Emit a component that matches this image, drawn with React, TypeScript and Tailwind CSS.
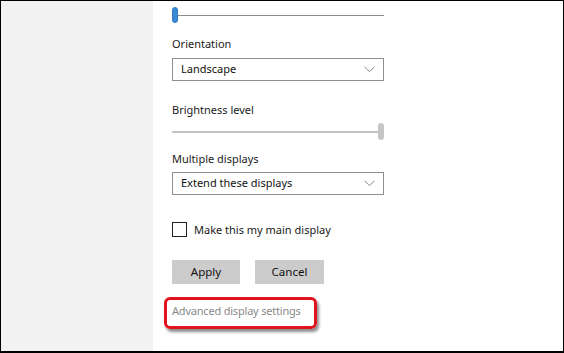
import React from "react";

function Chevron() {
  return (
    <svg width="11" height="7" viewBox="0 0 11 7" className="ml-auto mr-[8px]">
      <path d="M0.5 0.8 L5.5 5.6 L10.5 0.8" fill="none" stroke="#8a8a8a" strokeWidth="1" />
    </svg>
  );
}

function Dropdown({ label }: { label: string }) {
  return (
    <div className="flex items-center w-[212px] h-[23px] border border-[#8f8f8f] bg-white pl-[8px] text-[11px] text-[#111]">
      <span className="leading-[16px] -mt-[1px]">{label}</span>
      <Chevron />
    </div>
  );
}

export default function App() {
  return (
    <div
      className="w-[564px] h-[353px] border border-black border-b-2 flex bg-white overflow-hidden"
      style={{ fontFamily: '"Noto Sans", "Open Sans", sans-serif' }}
    >
      <div className="w-[152px] h-full bg-[#f2f2f2]" />
      <div className="relative flex-1 pl-[19px] flex flex-col">
        {/* top slider */}
        <div className="relative mt-[6px] w-[212px] h-[16px] flex items-center">
          <div className="w-[6px] h-[16px] rounded-[3px] bg-[#3a8ad6] border border-[#2f78c0]" />
          <div className="flex-1 h-[1px] bg-[#8c8c8c]" />
        </div>

        <div className="mt-[13px] h-[16px] leading-[16px] text-[11px] text-[#1a1a1a]">Orientation</div>
        <div className="mt-[6px]">
          <Dropdown label="Landscape" />
        </div>

        <div className="mt-[21px] h-[16px] leading-[16px] text-[11px] text-[#1a1a1a]">Brightness level</div>
        <div className="mt-[5px] w-[212px] h-[17px] flex items-center">
          <div className="flex-1 h-[2px] bg-[#c2c2c2]" />
          <div className="w-[6px] h-[17px] rounded-[3px] bg-[#c6c6c6]" />
        </div>

        <div className="mt-[11px] h-[16px] leading-[16px] text-[11px] text-[#1a1a1a]">Multiple displays</div>
        <div className="mt-[5px]">
          <Dropdown label="Extend these displays" />
        </div>

        <div className="mt-[27px] flex items-center h-[15px]">
          <div className="w-[15px] h-[15px] border border-[#222] bg-white" />
          <span className="ml-[7px] text-[11px] text-[#1a1a1a] leading-[15px]">Make this my main display</span>
        </div>

        <div className="mt-[23px] flex gap-[15px]">
          <div className="w-[68px] h-[24px] bg-[#cccccc] flex items-center justify-center text-[11.5px] text-[#111]">Apply</div>
          <div className="w-[69px] h-[24px] bg-[#cccccc] flex items-center justify-center text-[11.5px] text-[#111]">Cancel</div>
        </div>

        <div className="mt-[19px] h-[16px] leading-[16px] text-[11px] tracking-[-0.2px] text-[#8a8a8a]">Advanced display settings</div>

        <div className="absolute left-[11px] top-[296px] w-[153px] h-[32px] rounded-[6px] border-[3px] border-[#e0141c] shadow-[2px_3px_3px_rgba(0,0,0,0.45)]" />
      </div>
    </div>
  );
}
